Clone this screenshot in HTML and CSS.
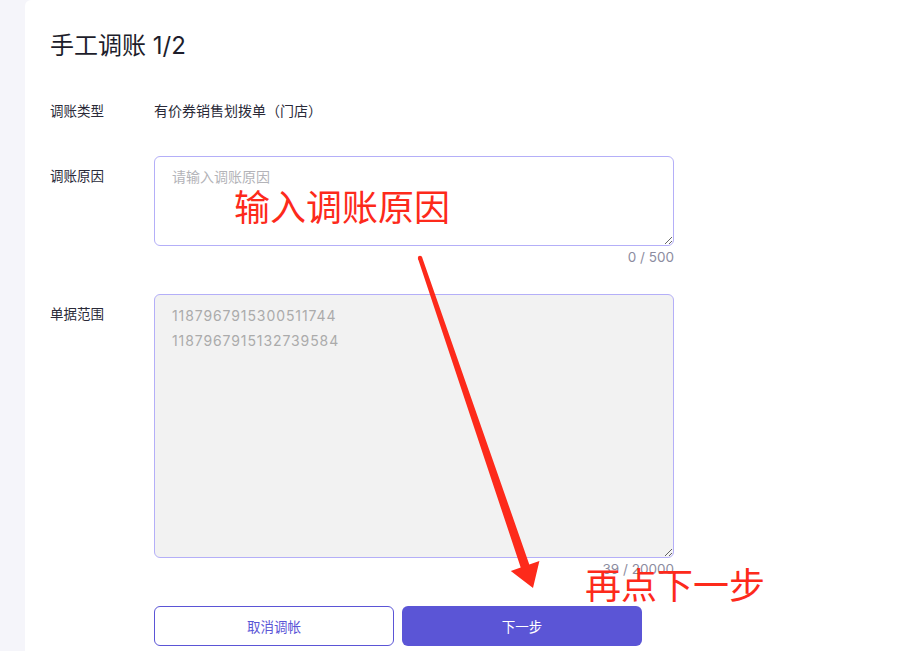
FILE: index.html
```html
<!DOCTYPE html>
<html lang="zh-CN">
<head>
    <meta charset="UTF-8">
    <meta name="viewport" content="width=device-width, initial-scale=1.0">
    <title>手工调账 1/2</title>
    <link rel="stylesheet" href="styles.css">
</head>
<body>
    <div class="layout">
        <div class="side"></div>

        <div class="panel">
            <h1 class="title">手工调账 1/2</h1>

            <div class="row row-info">
                <div class="label">调账类型</div>
                <div class="value">有价券销售划拨单（门店）</div>
            </div>

            <div class="row">
                <div class="label label-top">调账原因</div>
                <div class="field">
                    <textarea class="input input-reason" placeholder="请输入调账原因"></textarea>
                    <div class="counter">0 / 500</div>
                </div>
            </div>

            <div class="row">
                <div class="label label-top">单据范围</div>
                <div class="field">
                    <textarea class="input input-range" disabled>1187967915300511744
1187967915132739584</textarea>
                    <div class="counter">39 / 20000</div>
                </div>
            </div>

            <div class="actions">
                <button class="btn btn-ghost">取消调帐</button>
                <button class="btn btn-primary">下一步</button>
            </div>
        </div>
    </div>

    <!-- 标注：红色箭头和说明文字 -->
    <div class="note note-reason">输入调账原因</div>
    <div class="note note-next">再点下一步</div>
    <svg class="arrow" width="924" height="651" viewBox="0 0 924 651">
        <circle cx="420" cy="258" r="2.2" fill="#fd2a1b"/>
        <polygon fill="#fd2a1b" points="418,258.7 422.1,257.3 529.3,564.5 539.4,561 533,588 510.8,571 520.7,567.5"/>
    </svg>
</body>
</html>
```

FILE: styles.css
```css
* {
    margin: 0;
    padding: 0;
    box-sizing: border-box;
}

body {
    font-family: Inter, "Noto Sans CJK SC", sans-serif;
    background: #f5f5fa;
    color: #23232f;
    height: 651px;
    overflow: hidden;
    position: relative;
}

.layout {
    display: flex;
    min-height: 651px;
}

.side {
    width: 25px;
    flex-shrink: 0;
}

.panel {
    flex: 1;
    background: white;
    border-top-left-radius: 6px;
    padding: 31px 25px 0 25px;
}

.title {
    font-size: 24px;
    font-weight: 400;
    line-height: 30px;
    color: #1d1d2b;
    margin-bottom: 40px;
}

.row {
    display: flex;
    margin-bottom: 28px;
}

.row-info {
    margin-bottom: 35px;
}

.label {
    width: 104px;
    flex-shrink: 0;
    font-size: 13.5px;
    line-height: 20px;
    color: #2a2a38;
}

.label-top {
    padding-top: 10px;
}

.value {
    font-size: 14px;
    line-height: 20px;
    color: #2a2a38;
}

.field {
    width: 520px;
    display: flex;
    flex-direction: column;
}

.input {
    width: 520px;
    border: 1px solid #b4aff8;
    border-radius: 6px;
    font-family: Inter, "Noto Sans CJK SC", sans-serif;
    font-size: 14px;
    outline: none;
    padding: 9px 17px;
    background: white;
}

.input::placeholder {
    color: #b3b3b8;
}

.input-reason {
    height: 90px;
    line-height: 22px;
}

.input-range {
    height: 264px;
    line-height: 25px;
    padding-top: 8px;
    letter-spacing: 0.9px;
    background: #f2f2f2;
    color: #ababab;
    -webkit-text-fill-color: #ababab;
}

.counter {
    margin-top: 2px;
    text-align: right;
    font-size: 13.5px;
    line-height: 18px;
    color: #8c8ca0;
}

.actions {
    display: flex;
    gap: 8px;
    padding-left: 104px;
}

.btn {
    width: 240px;
    height: 40px;
    border-radius: 6px;
    font-family: Inter, "Noto Sans CJK SC", sans-serif;
    font-size: 13.5px;
    cursor: pointer;
}

.btn-ghost {
    background: white;
    color: #5b55d6;
    border: 1px solid #5b55d6;
}

.btn-primary {
    background: #5b55d6;
    color: white;
    border: none;
}

.note {
    position: absolute;
    font-family: "Noto Sans CJK SC", sans-serif;
    font-size: 36px;
    line-height: 40px;
    color: #fd2a1b;
    white-space: nowrap;
}

.note-reason {
    left: 234px;
    top: 185px;
}

.note-next {
    left: 585px;
    top: 563px;
}

.arrow {
    position: absolute;
    left: 0;
    top: 0;
}
```
